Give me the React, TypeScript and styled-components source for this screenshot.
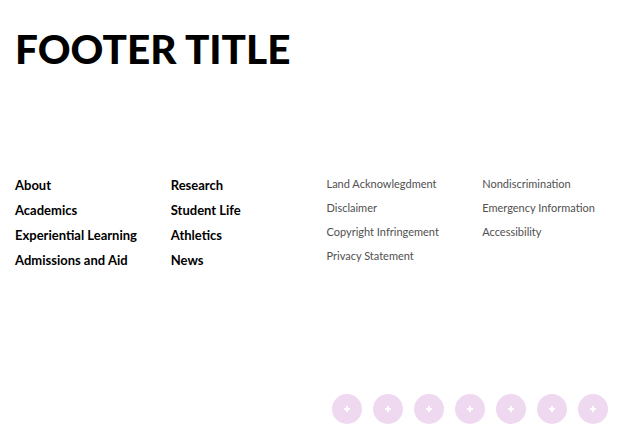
import React from "react";
import styled, { createGlobalStyle } from "styled-components";

const Global = createGlobalStyle`
  html, body { margin: 0; padding: 0; background: #ffffff; }
  body { font-family: "Lato", "Liberation Sans", sans-serif; }
`;

const Footer = styled.footer`
  width: 623px;
  height: 444px;
  display: flex;
  flex-direction: column;
  box-sizing: border-box;
`;

const Title = styled.h1`
  margin: 0;
  padding: 27px 15px 0 15px;
  font-family: "Lato", sans-serif;
  font-weight: 900;
  font-size: 40.5px;
  line-height: 44px;
  letter-spacing: 0;
  color: #000;
`;

const Columns = styled.div`
  display: grid;
  grid-template-columns: repeat(4, 1fr);
  margin-top: 107px;
`;

const Column = styled.ul<{ $gap: number; $offset?: number }>`
  list-style: none;
  margin: ${(p) => p.$offset ?? 0}px 0 0 0;
  padding: 0 0 0 15px;
  display: flex;
  flex-direction: column;
  gap: ${(p) => p.$gap}px;
`;

const MainLink = styled.li`
  font-weight: 700;
  font-size: 13px;
  line-height: 15px;
  color: #000;
  white-space: nowrap;
`;

const LegalLink = styled.li`
  font-weight: 400;
  font-size: 11px;
  line-height: 14px;
  color: #505050;
  white-space: nowrap;
`;

const Socials = styled.div`
  margin-top: auto;
  display: flex;
  justify-content: flex-end;
  gap: 11px;
  padding: 0 15px 20px 0;
`;

const Circle = styled.a`
  width: 30px;
  height: 30px;
  border-radius: 50%;
  background: #efd9f1;
  display: flex;
  align-items: center;
  justify-content: center;
`;

const Plus = () => (
  <svg width="8" height="8" viewBox="0 0 8 8">
    <path d="M4 1v6M1 4h6" stroke="#fff" strokeWidth="2" />
  </svg>
);

const col1 = ["About", "Academics", "Experiential Learning", "Admissions and Aid"];
const col2 = ["Research", "Student Life", "Athletics", "News"];
const col3 = ["Land Acknowlegdment", "Disclaimer", "Copyright Infringement", "Privacy Statement"];
const col4 = ["Nondiscrimination", "Emergency Information", "Accessibility"];

export default function App() {
  return (
    <>
      <Global />
      <Footer>
        <Title>FOOTER TITLE</Title>
        <Columns>
          <Column $gap={10}>
            {col1.map((t) => (
              <MainLink key={t}>{t}</MainLink>
            ))}
          </Column>
          <Column $gap={10}>
            {col2.map((t) => (
              <MainLink key={t}>{t}</MainLink>
            ))}
          </Column>
          <Column $gap={10} $offset={-1}>
            {col3.map((t) => (
              <LegalLink key={t}>{t}</LegalLink>
            ))}
          </Column>
          <Column $gap={10} $offset={-1}>
            {col4.map((t) => (
              <LegalLink key={t}>{t}</LegalLink>
            ))}
          </Column>
        </Columns>
        <Socials>
          {Array.from({ length: 7 }).map((_, i) => (
            <Circle key={i}>
              <Plus />
            </Circle>
          ))}
        </Socials>
      </Footer>
    </>
  );
}
